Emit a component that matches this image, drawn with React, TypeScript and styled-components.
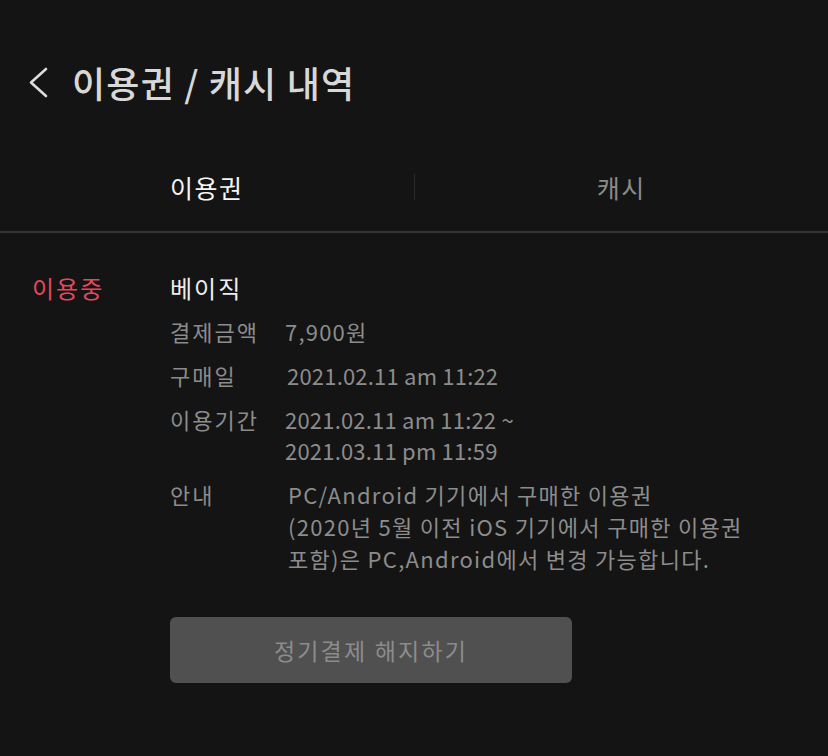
import React from 'react';
import styled, { createGlobalStyle } from 'styled-components';

const GlobalStyle = createGlobalStyle`
  html, body {
    margin: 0;
    padding: 0;
    background: #141414;
  }
  body {
    font-family: "Noto Sans CJK KR", "Noto Sans", sans-serif;
    color: #ddd;
  }
`;

const Page = styled.div`
  width: 828px;
  min-height: 756px;
  background: #141414;
`;

const Header = styled.header`
  display: flex;
  align-items: center;
  height: 131px;
  padding: 33px 0 0 28px;
  box-sizing: border-box;
`;

const BackButton = styled.button`
  display: flex;
  align-items: center;
  justify-content: center;
  width: 22px;
  height: 34px;
  padding: 0;
  margin-right: 22px;
  border: 0;
  background: none;
  cursor: pointer;
`;

const Title = styled.h1`
  margin: 0;
  font-size: 36px;
  font-weight: 500;
  color: #d8d8d8;
  letter-spacing: 1.2px;
`;

const Tabs = styled.nav`
  display: flex;
  align-items: center;
  height: 102px;
  padding-top: 12px;
  box-sizing: border-box;
  border-bottom: 2px solid #333;
`;

const Tab = styled.div<{ $active?: boolean }>`
  flex: 1;
  text-align: center;
  font-size: 25px;
  line-height: 32px;
  letter-spacing: 1.5px;
  color: ${(p) => (p.$active ? '#f5f5f5' : '#8a8a8a')};
`;

const TabDivider = styled.span`
  width: 1px;
  height: 26px;
  background: #2a2a2a;
`;

const Content = styled.section`
  display: flex;
  padding: 39px 0 0 32px;
`;

const Status = styled.div`
  width: 138px;
  font-size: 24px;
  line-height: 32px;
  letter-spacing: 2px;
  color: #e4485b;
`;

const Details = styled.div`
  display: flex;
  flex-direction: column;
`;

const Plan = styled.div`
  font-size: 24px;
  line-height: 32px;
  letter-spacing: 2px;
  color: #eee;
`;

const InfoRow = styled.div`
  display: flex;
  margin-top: 12px;
  font-size: 22px;
  line-height: 31.8px;
  color: #8c8c8c;
`;

const Label = styled.div`
  width: 115px;
  flex-shrink: 0;
  letter-spacing: 2px;
`;

const Value = styled.div<{ $nudge?: number; $spacing?: number }>`
  padding-left: ${(p) => p.$nudge ?? 0}px;
  letter-spacing: ${(p) => p.$spacing ?? 0.2}px;
  white-space: nowrap;
`;

const CancelButton = styled.button`
  width: 402px;
  height: 66px;
  margin-top: 42px;
  border: 0;
  border-radius: 6px;
  background: #505050;
  color: #8c8c8c;
  font-family: inherit;
  font-size: 23px;
  letter-spacing: 2.2px;
  cursor: pointer;
`;

const ChevronLeft = () => (
  <svg width="22" height="34" viewBox="0 0 22 34" fill="none">
    <path
      d="M18 4 L3 17.5 L18 31"
      stroke="#dcdcdc"
      strokeWidth="2.6"
      strokeLinecap="round"
      strokeLinejoin="round"
    />
  </svg>
);

const App: React.FC = function () {
  return (
    <Page>
      <GlobalStyle />
      <Header>
        <BackButton aria-label="뒤로">
          <ChevronLeft />
        </BackButton>
        <Title>이용권 / 캐시 내역</Title>
      </Header>

      <Tabs>
        <Tab $active>이용권</Tab>
        <TabDivider />
        <Tab>캐시</Tab>
      </Tabs>

      <Content>
        <Status>이용중</Status>
        <Details>
          <Plan>베이직</Plan>
          <InfoRow>
            <Label>결제금액</Label>
            <Value $spacing={1.2}>7,900원</Value>
          </InfoRow>
          <InfoRow>
            <Label>구매일</Label>
            <Value $nudge={2}>2021.02.11 am 11:22</Value>
          </InfoRow>
          <InfoRow>
            <Label>이용기간</Label>
            <Value>
              2021.02.11 am 11:22 ~
              <br />
              2021.03.11 pm 11:59
            </Value>
          </InfoRow>
          <InfoRow>
            <Label>안내</Label>
            <Value $nudge={3} $spacing={1.3}>
              PC/Android 기기에서 구매한 이용권
              <br />
              (2020년 5월 이전 iOS 기기에서 구매한 이용권
              <br />
              포함)은 PC,Android에서 변경 가능합니다.
            </Value>
          </InfoRow>
          <CancelButton>정기결제 해지하기</CancelButton>
        </Details>
      </Content>
    </Page>
  );
};

export default App;
